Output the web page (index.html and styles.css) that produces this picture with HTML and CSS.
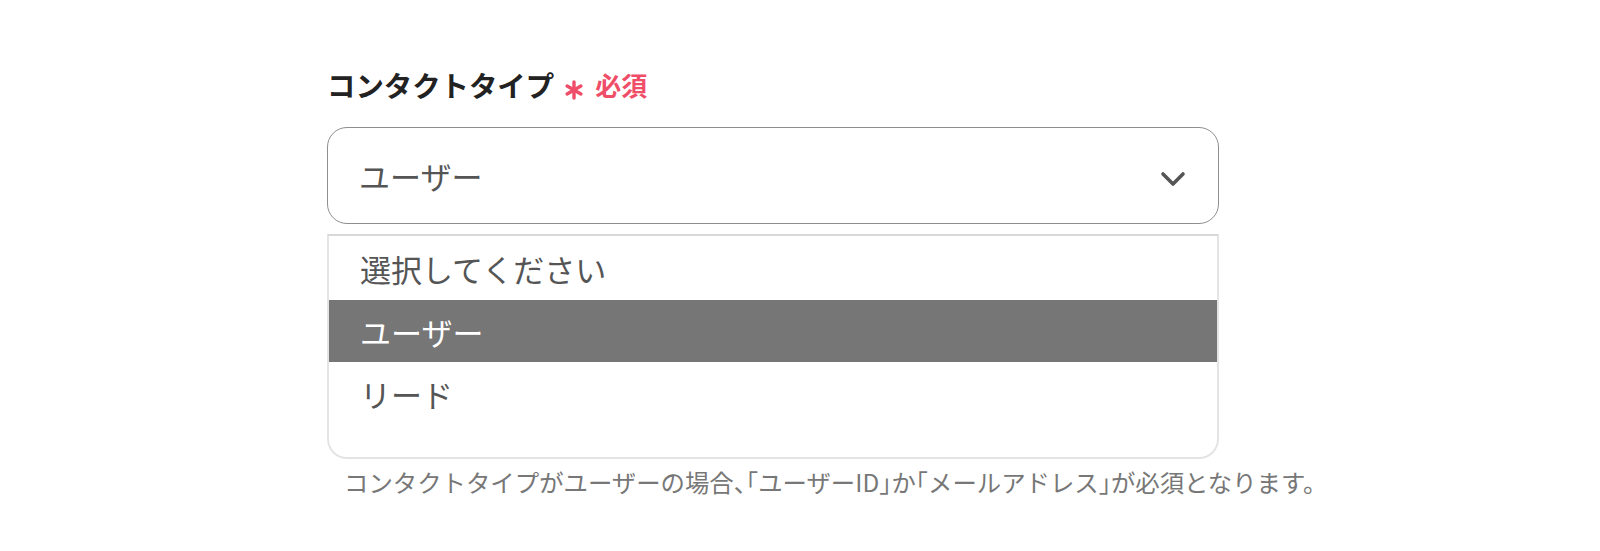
FILE: index.html
```html
<!DOCTYPE html>
<html lang="ja">
<head>
<meta charset="utf-8">
<title>コンタクトタイプ</title>
<link rel="stylesheet" href="styles.css">
</head>
<body>
<div class="field">
  <div class="label">
    <span class="label-text">コンタクトタイプ</span>
    <svg class="req-mark" width="20" height="20" viewBox="0 0 20 20" aria-hidden="true">
      <g stroke="#ef4d68" stroke-width="3.4" stroke-linecap="round">
        <line x1="10" y1="2" x2="10" y2="18"/>
        <line x1="3.1" y1="6" x2="16.9" y2="14"/>
        <line x1="3.1" y1="14" x2="16.9" y2="6"/>
      </g>
    </svg>
    <span class="req-text">必須</span>
  </div>
  <div class="select">
    <span class="select-value">ユーザー</span>
    <svg class="chevron" width="26" height="16" viewBox="0 0 26 16" aria-hidden="true">
      <polyline points="3,3 13,13 23,3" fill="none" stroke="#555" stroke-width="3.6" stroke-linecap="round" stroke-linejoin="round"/>
    </svg>
  </div>
  <ul class="options">
    <li class="option">選択してください</li>
    <li class="option selected">ユーザー</li>
    <li class="option">リード</li>
  </ul>
  <p class="help">コンタクトタイプがユーザーの場合<span class="p">、「</span>ユーザーID<span class="p">」</span>か<span class="p">「</span>メールアドレス<span class="p">」</span>が必須となります。</p>
</div>
</body>
</html>
```
FILE: styles.css
```css
html, body {
  margin: 0;
  padding: 0;
  background: #ffffff;
}

body {
  font-family: "Noto Sans CJK JP", "Noto Sans", sans-serif;
  color: #555555;
}

.field {
  width: 892px;
  margin-left: 327px;
  padding-top: 66px;
}

.label {
  display: flex;
  align-items: center;
  height: 38px;
  margin-bottom: 23px;
}

.label-text {
  font-size: 28.4px;
  font-weight: 700;
  color: #222222;
  line-height: 38px;
}

.req-mark {
  margin-left: 10px;
  margin-top: 10px;
}

.req-text {
  margin-left: 11px;
  font-size: 26px;
  font-weight: 700;
  color: #ef4d68;
  line-height: 38px;
}

.select {
  box-sizing: border-box;
  height: 97px;
  border: 1.5px solid #8e8e8e;
  border-radius: 20px;
  display: flex;
  align-items: center;
  justify-content: space-between;
  padding: 0 32px 0 31px;
}

.select-value {
  font-size: 31px;
  color: #555555;
  line-height: 40px;
}

.chevron {
  display: block;
  margin-top: 6px;
}

.options {
  list-style: none;
  margin: 10px 0 0 0;
  padding: 1px 0 33px 0;
  border: 2px solid #e4e4e4;
  border-top-color: #d8d8d8;
  border-radius: 0 0 20px 20px;
}

.option {
  height: 62px;
  display: flex;
  align-items: center;
  padding-left: 31px;
  font-size: 31px;
  color: #555555;
}

.option:first-child {
  height: 63px;
}

.option.selected {
  background: #767676;
  color: #ffffff;
}

.help {
  margin: 7px 0 0 0;
  padding-left: 17px;
  font-size: 24.4px;
  line-height: 32px;
  color: #777777;
  white-space: nowrap;
}

.help .p {
  font-feature-settings: "halt";
}
```
